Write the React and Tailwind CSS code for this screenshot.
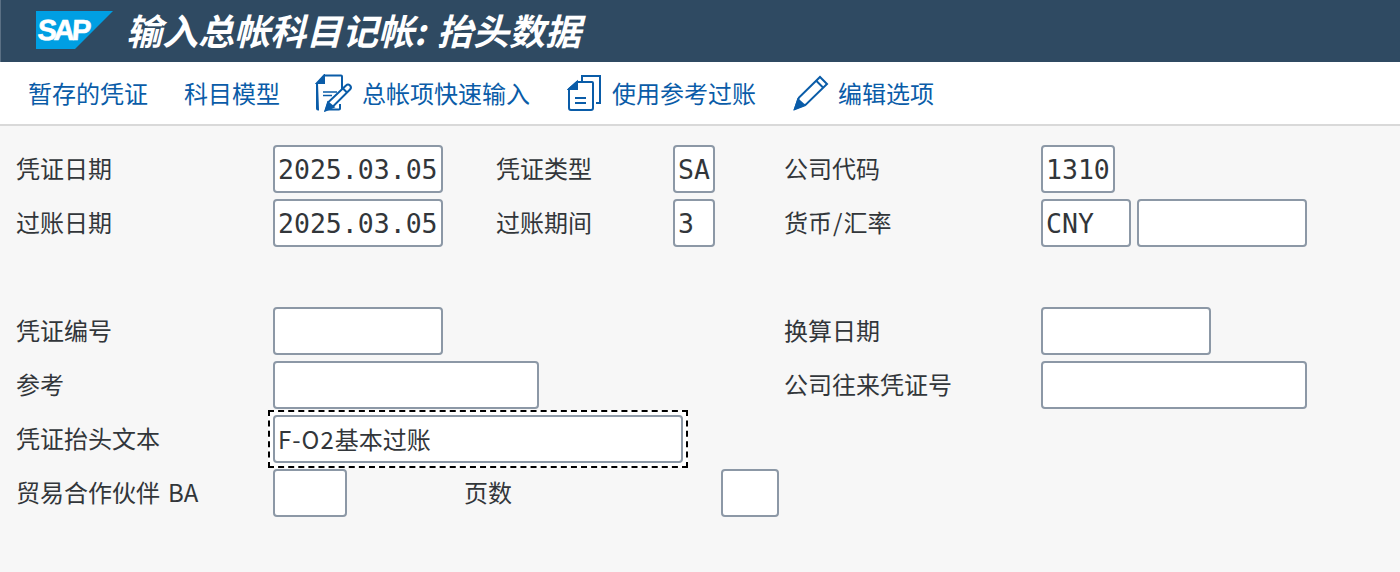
const cjk = "font-['Noto_Sans_CJK_SC','Noto_Sans',sans-serif]";
const Label = ({ w, children, className = "" }) => (
  <div className={`${w} ${className} shrink-0 text-[24px] leading-[46px] text-[#32363a] whitespace-nowrap`}>{children}</div>
);
const Input = ({ w, value = "", className = "" }) => (
  <div className={`${w} ${className} shrink-0 h-[48px] rounded-[4px] border-2 border-[#8c98a6] bg-white pl-[3px] overflow-hidden font-['DejaVu_Sans_Mono','Noto_Sans_CJK_SC',monospace] text-[26.5px] leading-[45px] text-[#32363a] whitespace-nowrap`}>{value}</div>
);
const NoteIcon = () => (
  <svg width="38" height="38" viewBox="0 0 38 38" fill="none" stroke="#0a5ca8" strokeWidth="2" className="shrink-0">
    <path d="M9 1.5H26Q27 1.5 27 2.5V17M25 30V34.5Q25 35.5 24 35.5H10M3 35.5Q2 35.5 2 34.5V9Z" />
    <path d="M9 1.5V9H2Z" fill="#0a5ca8" />
    <path d="M8 18H22M8 21.5H17" strokeWidth="1.6" />
    <path d="M11 35.5L13.5 28L31 11.5Q33 9.5 35 11.5Q37 13.5 35 15.5L18 32.5Z" fill="#fff" />
    <path d="M10.5 36.5L13 28.5L18.5 33Z" fill="#0a5ca8" />
    <path d="M28 14.5L32 18.5" />
  </svg>
);
const CopyIcon = () => (
  <svg width="34" height="38" viewBox="0 0 34 38" fill="none" stroke="#0a5ca8" strokeWidth="2" className="shrink-0">
    <path d="M15 7V2H33V29H29" />
    <path d="M10 8H25Q26 8 26 9V34Q26 36 24 36H4Q2 36 2 34V15Z" fill="#fff" />
    <path d="M10 8V15H2Z" fill="#0a5ca8" />
    <path d="M8 24H19M8 29H19" strokeWidth="2" />
  </svg>
);
const PencilIcon = () => (
  <svg width="36" height="36" viewBox="0 0 36 36" fill="none" stroke="#0a5ca8" strokeWidth="2" className="shrink-0">
    <path d="M2 33.5L6 22.5L27 2L34 9L13 29.5Z" />
    <path d="M2 34L5 24.5L11.5 30.5Z" fill="#0a5ca8" />
    <path d="M23.5 6L30 12.5" />
  </svg>
);
const Tool = ({ className = "", icon, children }) => (
  <div className={`${className} flex items-center shrink-0 text-[24px] text-[#0a5ca8] whitespace-nowrap`}>
    {icon}
    {children}
  </div>
);
const Row = ({ className = "", children }) => <div className={`${className} flex h-[48px]`}>{children}</div>;

export default function App() {
  return (
    <div className={`${cjk} w-[1400px] h-[572px] overflow-hidden bg-[#f7f7f7]`}>
      <header className="h-[62px] bg-[#2f4a62] border-l border-[#5b7084] flex items-center pl-[35px]">
        <svg width="78" height="38" viewBox="0 0 78 38" className="shrink-0 mb-[2px]">
          <polygon points="0,0 77,0 39,38 0,38" fill="#009fe3" />
          <text x="1" y="29" fontFamily="Liberation Sans" fontWeight="700" fontSize="29" letterSpacing="-3" fill="#fff" stroke="#fff" strokeWidth="0.6" transform="skewX(-4) translate(2 0)">SAP</text>
        </svg>
        <h1 className="ml-[12px] mb-[5px] text-[36px] leading-[54px] font-bold italic text-white whitespace-nowrap">输入总帐科目记帐: <span className="ml-[3px]">抬头数据</span></h1>
      </header>
      <nav className="h-[64px] bg-white border-b-2 border-[#d9d9d9] flex items-center pl-[28px]">
        <Tool>暂存的凭证</Tool>
        <Tool className="ml-[36px]">科目模型</Tool>
        <Tool className="ml-[35px]" icon={<NoteIcon />}><span className="ml-[9px]">总帐项快速输入</span></Tool>
        <Tool className="ml-[37px]" icon={<CopyIcon />}><span className="ml-[11px]">使用参考过账</span></Tool>
        <Tool className="ml-[37px]" icon={<PencilIcon />}><span className="ml-[9px]">编辑选项</span></Tool>
      </nav>
      <main className="pl-[16px] pt-[19px] flex flex-col gap-[6px]">
        <Row>
          <Label w="w-[257px]">凭证日期</Label>
          <Input w="w-[170px]" value="2025.03.05" />
          <Label w="w-[177px]" className="ml-[53px]">凭证类型</Label>
          <Input w="w-[42px]" value="SA" />
          <Label w="w-[257px]" className="ml-[69px]">公司代码</Label>
          <Input w="w-[74px]" value="1310" />
        </Row>
        <Row>
          <Label w="w-[257px]">过账日期</Label>
          <Input w="w-[170px]" value="2025.03.05" />
          <Label w="w-[177px]" className="ml-[53px]">过账期间</Label>
          <Input w="w-[42px]" value="3" />
          <Label w="w-[257px]" className="ml-[69px]">货币<span className="mx-[1px]">/</span>汇率</Label>
          <Input w="w-[90px]" value="CNY" />
          <Input w="w-[170px]" className="ml-[6px]" />
        </Row>
        <Row className="mt-[54px]">
          <Label w="w-[257px]">凭证编号</Label>
          <Input w="w-[170px]" />
          <Label w="w-[257px]" className="ml-[341px]">换算日期</Label>
          <Input w="w-[170px]" />
        </Row>
        <Row>
          <Label w="w-[257px]">参考</Label>
          <Input w="w-[266px]" />
          <Label w="w-[257px]" className="ml-[245px]">公司往来凭证号</Label>
          <Input w="w-[266px]" />
        </Row>
        <Row>
          <Label w="w-[257px]">凭证抬头文本</Label>
          <div className="relative w-[410px] h-[48px] shrink-0">
            <div className="absolute -left-[5px] -right-[5px] -top-[5px] -bottom-[5px] bg-white border-2 border-dashed border-black" />
            <div className="relative h-[48px] rounded-[4px] border-2 border-[#8c98a6] bg-white pl-[3px] text-[24px] leading-[43px] text-[#32363a] whitespace-nowrap">
              <span className="tracking-[1px]">F-O2</span>基本过账
            </div>
          </div>
        </Row>
        <Row>
          <Label w="w-[257px]">贸易合作伙伴<span className="ml-[8px]">BA</span></Label>
          <Input w="w-[74px]" />
          <Label w="w-[257px]" className="ml-[117px]">页数</Label>
          <Input w="w-[58px]" />
        </Row>
      </main>
    </div>
  );
}
